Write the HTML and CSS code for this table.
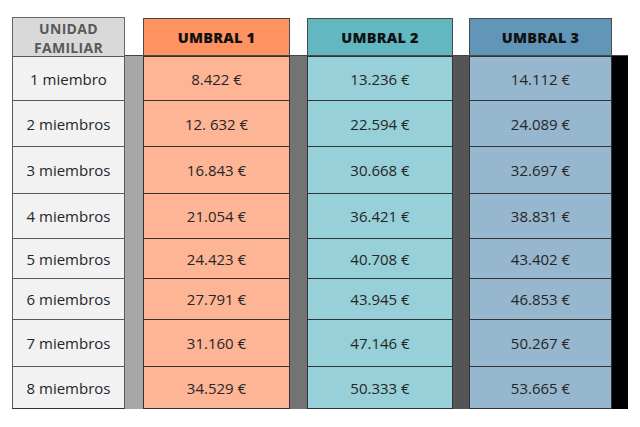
FILE: index.html
```html
<!DOCTYPE html>
<html lang="es">
<head>
<meta charset="utf-8">
<link rel="stylesheet" href="styles.css">
</head>
<body>
<div class="table">
  <div class="hd hd-fam">UNIDAD<br>FAMILIAR</div>
  <div class="hd hd-u1">UMBRAL 1</div>
  <div class="hd hd-u2">UMBRAL 2</div>
  <div class="hd hd-u3">UMBRAL 3</div>

  <div class="bar bar1"></div>
  <div class="bar bar2"></div>
  <div class="bar bar3"></div>
  <div class="bar bar4"></div>

  <div class="c fam">1 miembro</div><div class="c u1">8.422 €</div><div class="c u2">13.236 €</div><div class="c u3">14.112 €</div>
  <div class="c fam">2 miembros</div><div class="c u1">12. 632 €</div><div class="c u2">22.594 €</div><div class="c u3">24.089 €</div>
  <div class="c fam">3 miembros</div><div class="c u1">16.843 €</div><div class="c u2">30.668 €</div><div class="c u3">32.697 €</div>
  <div class="c fam">4 miembros</div><div class="c u1">21.054 €</div><div class="c u2">36.421 €</div><div class="c u3">38.831 €</div>
  <div class="c fam">5 miembros</div><div class="c u1">24.423 €</div><div class="c u2">40.708 €</div><div class="c u3">43.402 €</div>
  <div class="c fam">6 miembros</div><div class="c u1">27.791 €</div><div class="c u2">43.945 €</div><div class="c u3">46.853 €</div>
  <div class="c fam">7 miembros</div><div class="c u1">31.160 €</div><div class="c u2">47.146 €</div><div class="c u3">50.267 €</div>
  <div class="c fam last">8 miembros</div><div class="c u1 last">34.529 €</div><div class="c u2 last">50.333 €</div><div class="c u3 last">53.665 €</div>
</div>
</body>
</html>
```
FILE: styles.css
```css
* { box-sizing: border-box; }
html, body { margin: 0; padding: 0; background: #fff; }
body {
  font-family: "Open Sans", "DejaVu Sans", sans-serif;
  color: #262626;
}
.table {
  display: grid;
  margin: 17px 0 0 12px;
  width: max-content;
  grid-template-columns: 113px 18px 147px 17px 146px 16px 143px 16px;
  grid-template-rows: 39px 44px 46px 47px 45px 40px 41px 47px 43px;
  grid-auto-flow: row;
}
.hd {
  display: flex;
  align-items: center;
  justify-content: center;
  text-align: center;
  border: 1px solid #4a4a4a;
  font-weight: 800;
  font-size: 14.5px;
  color: #111;
  letter-spacing: 0.2px;
}
.hd-fam {
  grid-column: 1; grid-row: 1;
  background: #d9d9d9;
  color: #595959;
  font-size: 14px;
  font-weight: 700;
  line-height: 19px;
  letter-spacing: 0.3px;
  padding-top: 1px;
  border-color: #666;
  border-bottom: none;
}
.hd-u1 { grid-column: 3; grid-row: 1; background: #fe9260; margin-top: 1px; }
.hd-u2 { grid-column: 5; grid-row: 1; background: #62b7c1; margin-top: 1px; }
.hd-u3 { grid-column: 7; grid-row: 1; background: #6196b8; margin-top: 1px; }

.bar { grid-row: 2 / -1; border-top: 1px solid #444; }
.bar1 { grid-column: 2; background: #a6a6a6; margin-top: -1px; }
.bar2 { grid-column: 4; background: #737373; margin-top: -1px; }
.bar3 { grid-column: 6; background: #555555; margin-top: -1px; }
.bar4 { grid-column: 8; background: #000; margin-top: -1px; margin-bottom: -2px; }

.c {
  display: flex;
  align-items: center;
  justify-content: center;
  font-size: 15px;
  border-top: 1px solid #333;
  border-left: 1px solid #333;
  border-right: 1px solid #333;
}
.c.last { border-bottom: 1px solid #333; }
.fam { grid-column: 1; background: #f2f2f2; border-color: #5a5a5a; }
.u1 { grid-column: 3; background: #fdb596; }
.u2 { grid-column: 5; background: #97d0d8; }
.u3 { grid-column: 7; background: #96b7cd; }
```
